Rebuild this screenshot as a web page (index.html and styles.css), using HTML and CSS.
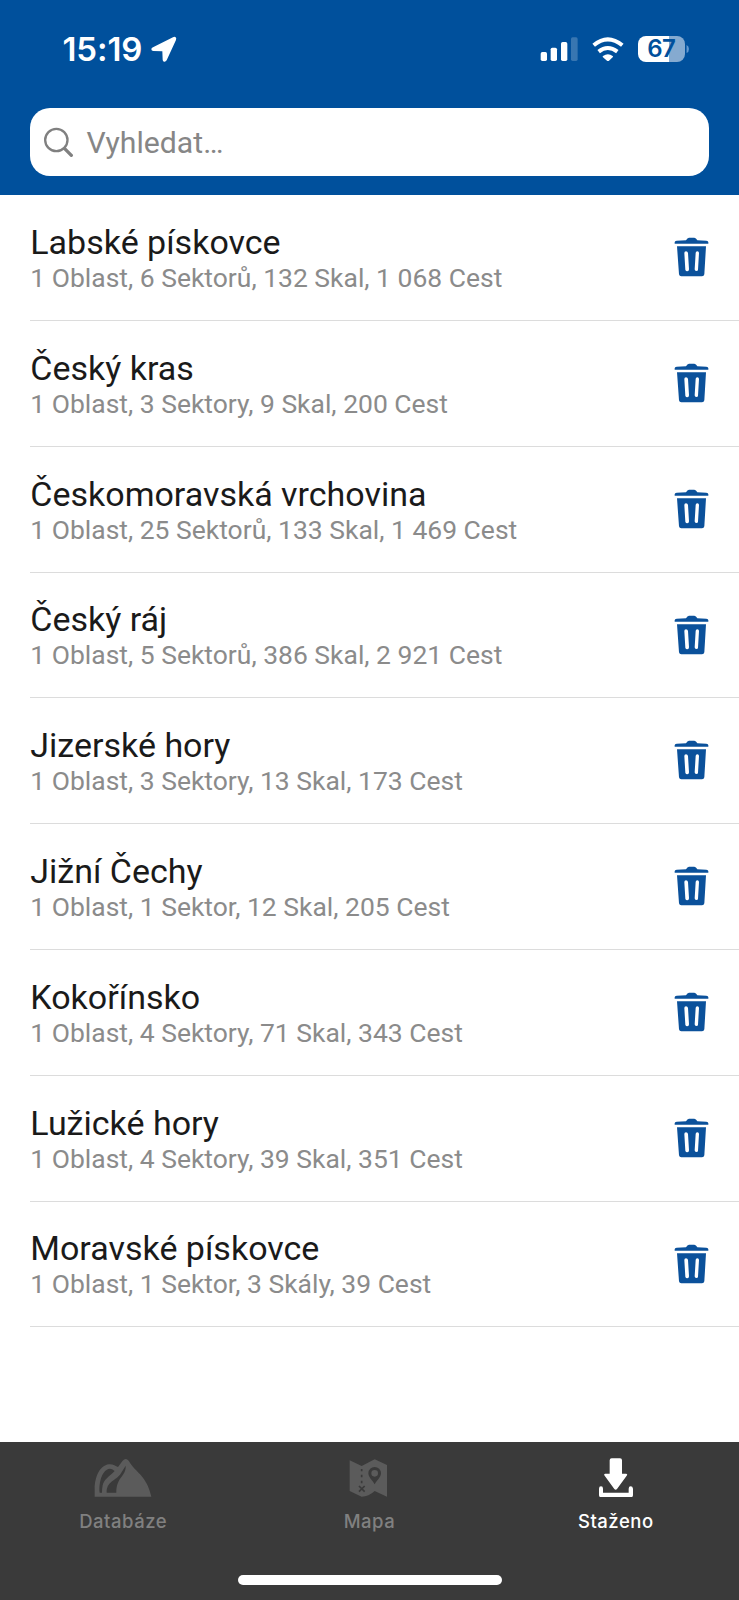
FILE: index.html
```
<!DOCTYPE html>
<html lang="cs">
<head>
<meta charset="utf-8">
<title>Staženo</title>
<link rel="stylesheet" href="styles.css">
</head>
<body>
<svg class="defs" width="0" height="0" aria-hidden="true">
  <symbol id="trash" viewBox="0 0 105 120">
    <path d="M2 20v-4q0-4 6-5l28-1q4-8 9-8h16q5 0 9 8l27 1q6 1 6 5v4z"/>
    <path fill-rule="evenodd" d="M9 28h87l-5 84q-1 6-7 6H22q-6 0-7-6zM31 48l3 50q1 5 6 5t5-6l-3-49q-1-5-6-5t-5 5zM65 48l-3 49q0 5 5 5t5-4l3-50q0-5-5-5t-5 5z"/>
  </symbol>
</svg>
<div class="screen">
  <header class="header">
    <div class="status">
      <span class="time">15:19</span>
      <svg class="location" viewBox="452 109 78 79"><path d="M526 113q3 2 1 8l-28 61q-3 5-8 4-4-1-4-6l-1-25-27-1q-6 0-6-5 0-4 5-6l60-30q5-3 8 0z"/></svg>
      <svg class="signal" viewBox="120 108 114 76"><rect x="122" y="156" width="19" height="27" rx="5"/><rect x="152" y="143" width="19" height="40" rx="5"/><rect x="183" y="126" width="19" height="57" rx="5"/><rect x="213" y="112" width="20" height="71" rx="5" opacity=".22"/></svg>
      <svg class="wifi" viewBox="274 109 96 73"><g class="arcs"><path d="M279 134Q321 98 365 134"/><path d="M294 153Q321 131 350 153"/></g><path d="M307 166q15-11 29 0 2 2 0 4l-11 10q-3 3-6 0l-12-10q-2-2 0-4z"/></svg>
      <div class="battery">67</div>
      <svg class="battery-tip" viewBox="0 0 8 20"><path d="M1 0q6 2 6 10t-6 10z"/></svg>
    </div>
    <div class="search">
      <svg viewBox="134 380 90 92"><circle cx="171" cy="419" r="33.500"/><path d="M196 445l20 20" class="handle"/></svg>
      <span>Vyhledat…</span>
    </div>
  </header>
  <main class="list">
    <div class="row"><div><div class="name">Labské pískovce</div><div class="info">1 Oblast, 6 Sektorů, 132 Skal, 1 068 Cest</div></div><svg class="trash"><use href="#trash"/></svg></div>
    <div class="row"><div><div class="name">Český kras</div><div class="info">1 Oblast, 3 Sektory, 9 Skal, 200 Cest</div></div><svg class="trash"><use href="#trash"/></svg></div>
    <div class="row"><div><div class="name">Českomoravská vrchovina</div><div class="info">1 Oblast, 25 Sektorů, 133 Skal, 1 469 Cest</div></div><svg class="trash"><use href="#trash"/></svg></div>
    <div class="row"><div><div class="name">Český ráj</div><div class="info">1 Oblast, 5 Sektorů, 386 Skal, 2 921 Cest</div></div><svg class="trash"><use href="#trash"/></svg></div>
    <div class="row"><div><div class="name">Jizerské hory</div><div class="info">1 Oblast, 3 Sektory, 13 Skal, 173 Cest</div></div><svg class="trash"><use href="#trash"/></svg></div>
    <div class="row"><div><div class="name">Jižní Čechy</div><div class="info">1 Oblast, 1 Sektor, 12 Skal, 205 Cest</div></div><svg class="trash"><use href="#trash"/></svg></div>
    <div class="row"><div><div class="name">Kokořínsko</div><div class="info">1 Oblast, 4 Sektory, 71 Skal, 343 Cest</div></div><svg class="trash"><use href="#trash"/></svg></div>
    <div class="row"><div><div class="name">Lužické hory</div><div class="info">1 Oblast, 4 Sektory, 39 Skal, 351 Cest</div></div><svg class="trash"><use href="#trash"/></svg></div>
    <div class="row"><div><div class="name">Moravské pískovce</div><div class="info">1 Oblast, 1 Sektor, 3 Skály, 39 Cest</div></div><svg class="trash"><use href="#trash"/></svg></div>
  </main>
  <footer class="footer">
    <nav class="tabs">
      <div class="tab">
        <svg viewBox="100 80 180 120"><path d="M105 199v-24c0-32 14-70 43-73 12-1 20 6 27 8l14-19q9-10 18 0c13 24 34 36 46 56 12 18 17 32 22 52z"/><g class="cut"><path d="M120 187c-3-37 10-70 30-72 7 0 11 3 15 7-16 17-32 24-36 43q-2 10-2 22z"/><path d="M141 187c0-33 20-32 40-54l17-27c2 32-28 32-28 81z"/></g></svg>
        <span>Databáze</span>
      </div>
      <div class="tab">
        <svg viewBox="58 80 180 120"><path d="M90 90l36 17 39-20 37 17v95l-37-17q-18 17-39 17l-36-17z"/><g class="cut"><path fill-rule="evenodd" d="M165 162c-7-12-19-22-19-33a19 19 0 0 1 38 0c0 11-12 21-19 33zM165 119a10 10 0 1 0 0 20 10 10 0 0 0 0-20z"/></g><path class="trail" d="M126 116v7M126 133v8M126 151v8M118 167l17 17M135 167l-17 17"/></svg>
        <span>Mapa</span>
      </div>
      <div class="tab active">
        <svg viewBox="78 80 180 120"><path d="M155 84h25q6 0 6 6v40h12q6 1 2 6l-29 40q-4 5-8 0l-29-40q-4-5 2-6h13V90q0-6 6-6z"/><path d="M117 175q0-7 6-7t6 7v12h77v-12q0-7 6-7t7 7v19q0 7-7 7h-88q-7 0-7-7z"/></svg>
        <span>Staženo</span>
      </div>
    </nav>
    <div class="home"></div>
  </footer>
</div>
</body>
</html>
```

FILE: styles.css
```
* { box-sizing: border-box; }
body { margin: 0; background: #fff; font-family: Roboto, sans-serif; }
svg { display: block; flex: none; }
.defs { position: absolute; }
.screen { display: flex; flex-direction: column; width: 739px; height: 1600px; overflow: hidden; }

.header { flex: none; height: 195.3px; padding: 30px 30px 0; background: #00509c; }
.status { display: flex; align-items: center; height: 78px; padding: 0 19.5px 40px 32.5px; color: #fff; fill: #fff; }
.time { width: 88px; font: 600 33px/40px Inter, sans-serif; letter-spacing: -.1px; white-space: nowrap; }
.location { width: 26px; height: 26.300px; margin-top: 1px; }
.signal { width: 38px; height: 25.300px; margin-left: auto; }
.wifi { width: 32px; height: 24.300px; margin-left: 13.300px; }
.arcs { fill: none; stroke: #fff; stroke-width: 12; }
.battery { width: 47.500px; height: 26px; margin-left: 14px; border-radius: 8px; background: linear-gradient(90deg, #fff 66.500%, #85aad0 66.500%); color: #00509c; font: 600 24px/26px Inter, sans-serif; letter-spacing: -.5px; text-align: center; }
.battery-tip { width: 3.500px; height: 8px; margin-left: 1px; fill: #6599cf; }
.search { display: flex; align-items: center; height: 68px; padding-left: 14px; border-radius: 20px; background: #fff; color: #868686; font-size: 30.200px; }
.search svg { width: 30px; height: 30.700px; margin-right: 12.500px; fill: none; stroke: #808080; stroke-width: 7; }
.search .handle { stroke-width: 10; stroke-linecap: round; }

.list { flex: 1; padding-left: 30.300px; }
.row { display: flex; justify-content: space-between; height: 125.800px; padding: 26.700px 30px 0 0; border-bottom: 1px solid #dcdcdc; white-space: nowrap; }
.name { color: #1a1a1a; font-size: 34px; line-height: 40px; }
.info { color: #8b8b8b; font-size: 26.480px; line-height: 32px; }
.trash { width: 35px; height: 40px; margin-top: 15.200px; fill: #0b519b; }

.footer { display: flex; flex-direction: column; flex: none; align-items: center; height: 158px; background: #3a3a3a; }
.tabs { display: grid; grid-template-columns: repeat(3, 1fr); width: 100%; height: 133px; padding-top: 14.500px; }
.tab { display: flex; flex-direction: column; align-items: center; color: #808080; fill: #5b5b5b; font: 500 18.500px/24px Inter, sans-serif; letter-spacing: .5px; }
.tab svg { width: 60px; height: 40px; margin-bottom: 12.500px; }
.tab.active { color: #fff; fill: #fff; }
.cut { fill: #3a3a3a; }
.trail { fill: none; stroke: #3a3a3a; stroke-width: 5; }
.home { width: 264px; height: 10px; border-radius: 5px; background: #fff; }
```
